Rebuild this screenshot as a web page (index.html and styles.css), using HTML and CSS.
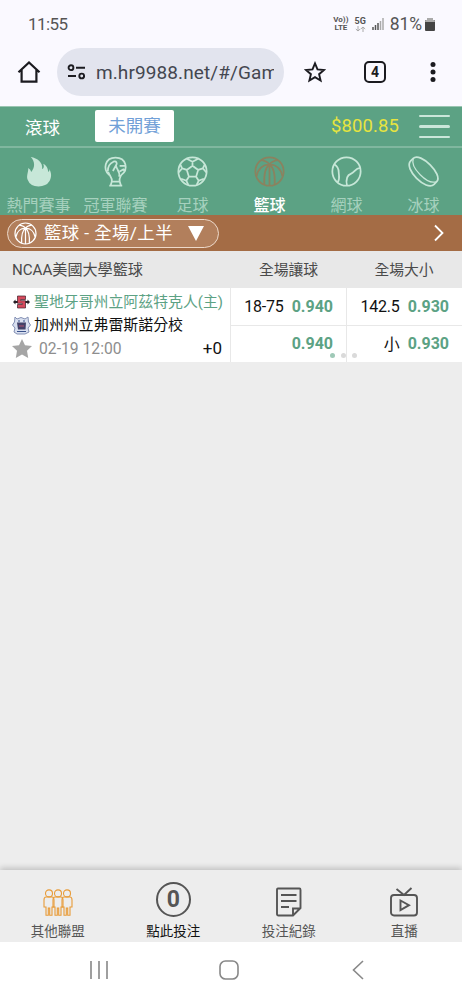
FILE: index.html
```html
<!DOCTYPE html>
<html lang="zh-Hant">
<head>
<meta charset="utf-8">
<title>籃球</title>
<link rel="stylesheet" href="styles.css">
</head>
<body>
<svg class="defs" aria-hidden="true">
  <symbol id="ball" viewBox="0 0 30 30">
    <circle cx="15" cy="15" r="13.7"/>
    <path d="M15 8.5V28.7M15 8.5C11 11 9.5 18 10 27.5M15 8.5C19 11 20.5 18 20 27.5M7 4C11 4.5 14 6.5 15 8.5C16 6.5 19 4.5 23 4M15 8.5C9 8 4 12 2.5 19.5M15 8.5C21 8 26 12 27.5 19.5"/>
  </symbol>
</svg>
<div class="phone">
  <header class="status">
    <span class="clock">11:55</span>
    <div class="signals">
      <span class="volte"><b>Vo))</b><b>LTE</b></span>
      <span class="net"><b>5G</b><svg width="11" height="6" viewBox="0 0 11 6"><path d="M3 0V5M.8 3L3 5L5.2 3M8 6V1M5.8 3L8 1L10.2 3"/></svg></span>
      <svg class="bars" width="12" height="12" viewBox="0 0 12 12"><path d="M1 12V9M3.5 12V7M6 12V5"/><path class="dim" d="M8.5 12V3M11 12V0"/></svg>
      <span class="percent">81%</span>
      <svg class="battery" width="10" height="13" viewBox="0 0 10 13"><path d="M2 0H8V2H9Q10 2 10 3V12Q10 13 9 13H1Q0 13 0 12V3Q0 2 1 2H2Z" fill="#444"/><path d="M2 0H8V2H9Q10 2 10 4H0Q0 2 1 2H2Z" fill="#aaa"/></svg>
    </div>
  </header>

  <div class="browser">
    <svg class="home" width="24" height="24" viewBox="0 0 24 24"><path d="M1.5 12.3L12 2.4L22.5 12.3M4.6 10V21.6H19.4V10"/></svg>
    <div class="address">
      <svg width="19" height="16" viewBox="0 0 19 16"><circle cx="4" cy="3.7" r="2.4"/><path d="M9 3.7H18M1 12H9"/><circle cx="14.7" cy="12" r="2.4"/></svg>
      <span>m.hr9988.net/#/Gam</span>
    </div>
    <svg class="bookmark" width="22" height="22" viewBox="0 0 22 22"><path d="M11 2.4L13.5 8.4L20 9L15.1 13.2L16.6 19.5L11 16.1L5.4 19.5L6.9 13.2L2 9L8.5 8.4Z"/></svg>
    <span class="tabs">4</span>
    <svg class="more" width="6" height="22" viewBox="0 0 6 22"><circle cx="3" cy="3.5" r="2.5"/><circle cx="3" cy="11" r="2.5"/><circle cx="3" cy="18.5" r="2.5"/></svg>
  </div>

  <div class="topbar">
    <span class="live">滾球</span>
    <span class="early">未開賽</span>
    <span class="balance">$800.85</span>
    <span class="menu"><i></i><i></i><i></i></span>
  </div>

  <nav class="sports">
    <div class="sport">
      <svg viewBox="0 0 30 30"><path class="solid" d="M7.5 1C14 2 19.5 6.5 18.5 12.5C20.5 12 20.5 9.5 19.5 7.5C23.5 9.5 24 12.5 24.5 15.5Q26 14.5 25.5 12.5C28 17 27.5 21 25.5 24.5Q22.5 29.5 15 29.5Q7 29.5 4.5 23C3 18.5 5.5 15.5 5 11.5Q7.5 13 8 15.5C11.5 11.5 12 5.5 7.5 1Z"/></svg>
      <span>熱門賽事</span>
    </div>
    <div class="sport">
      <svg viewBox="0 0 30 30"><path d="M9 18.5C2.500 13 4.500 1.500 15 1.500C25.500 1.500 28 13 20.500 18.500M9 28.700H21.500M10.500 24.800H19.800M10.300 28.500L11.500 24.500C12 21 9 19 8 15.500M20.200 28.500L19 24.500C18.500 21.500 19.500 20.500 20.500 18.500M7.500 15C7.500 11 9.500 7 13 5.500C16 4.500 17 7 15.500 9L12.500 14.500M15.500 9C15.500 13 20 15 18.500 20M19 9.500H25M19 15L22.500 13L24 15"/></svg>
      <span>冠軍聯賽</span>
    </div>
    <div class="sport">
      <svg viewBox="0 0 30 30"><circle cx="15" cy="15" r="13.7"/><path d="M15 9.5L20.5 13.5L18.5 20H11.5L9.5 13.5ZM15 9.5V5.5M20.5 13.5L25 12M18.5 20L21 24M11.5 20L9 24M9.5 13.5L5 12M9.5 2.7L15 5.5L20.5 2.7M27 8L25 12L28.5 16M26 22L21 24L19 28M11 28L9 24L4 22M1.5 16L5 12L3 8"/></svg>
      <span>足球</span>
    </div>
    <div class="sport active">
      <svg><use href="#ball"/></svg>
      <span>籃球</span>
    </div>
    <div class="sport">
      <svg viewBox="0 0 30 30"><circle cx="15" cy="15" r="13.7"/><path d="M3.2 8C6.5 10 7.5 13 7.5 16C7.5 19 9 22 6.5 25.5M28.4 11.5C23 12 23.5 15.5 19.5 17C15.5 18.5 14 22 15.5 28.7"/></svg>
      <span>網球</span>
    </div>
    <div class="sport">
      <svg viewBox="0 0 30 30"><g transform="rotate(45 15 15)"><path d="M-1 13C-1 3.500 31 3.500 31 13V16.500C31 27 -1 27 -1 16.500Z"/><path class="rim" d="M-.5 13.500C3 21.500 27 21.500 30.500 13.500"/></g></svg>
      <span>冰球</span>
    </div>
  </nav>

  <div class="filter">
    <div class="pill">
      <svg class="pill-ball"><use href="#ball"/></svg>
      <span>籃球 - 全場/上半</span>
      <i class="down"></i>
    </div>
    <svg class="next" width="10" height="18" viewBox="0 0 10 18"><path d="M1 1.5L8.5 9L1 16.5"/></svg>
  </div>

  <div class="league">
    <span class="league-name">NCAA美國大學籃球</span>
    <span>全場讓球</span>
    <span>全場大小</span>
  </div>

  <div class="match">
    <div class="teams">
      <div class="team host">
        <svg width="17" height="16" viewBox="0 0 17 16"><path d="M0 8L2.5 5.5V7H14.5V5.5L17 8L14.5 10.5V9H2.5V10.5Z" fill="#272127"/><path d="M4.500 2H12.500V5.500H7.700V6.700H12.500V14H4.500V10.500H9.300V9.300H4.500Z" fill="#d64a5d" stroke="#3d2029" stroke-width=".7"/></svg>
        <span>聖地牙哥州立阿茲特克人(主)</span>
      </div>
      <div class="team">
        <svg width="19" height="19" viewBox="0 0 19 19"><path d="M3 1L5 3L9 1.5L13 3L16 1L16.5 6L18.5 9L16 12L17 16L13 18H5L2 16L3 12L.5 9L2.5 6Z" fill="#d9e0f0" stroke="#8390b4"/><path d="M5 6.500H14L13.5 13.500H6Z" fill="#434269"/><path d="M6 5H8M11 5H13M5 15.500H14" stroke="#39518a" stroke-width="1.2"/><path d="M7 10H12" stroke="#b65370"/></svg>
        <span>加州州立弗雷斯諾分校</span>
      </div>
      <div class="kickoff">
        <svg width="20" height="19" viewBox="0 0 20 19"><path d="M10 0L13 6.2L20 7L15 11.8L16.2 19L10 15.5L3.8 19L5 11.8L0 7L7 6.2Z"/></svg>
        <time>02-19 12:00</time>
        <span class="extra">+0</span>
      </div>
    </div>
    <div class="odds">
      <div><span>18-75</span><b>0.940</b></div>
      <div><b>0.940</b></div>
    </div>
    <div class="odds">
      <div><span>142.5</span><b>0.930</b></div>
      <div><span>小</span><b>0.930</b></div>
    </div>
    <div class="dots"><i class="on"></i><i></i><i></i></div>
  </div>

  <main class="blank"></main>

  <nav class="bottom">
    <div class="action">
      <svg class="people" width="30" height="28" viewBox="0 0 30 28"><g id="person"><circle cx="6" cy="4.4" r="3.5"/><path d="M3 8H9Q11 8 11 11V18H9V26.3H6.7V19H5.3V26.3H3V18H1V11Q1 8 3 8Z"/></g><use href="#person" x="9"/><use href="#person" x="18"/></svg>
      <span>其他聯盟</span>
    </div>
    <div class="action current">
      <b class="count">0</b>
      <span>點此投注</span>
    </div>
    <div class="action">
      <svg width="26" height="30" viewBox="0 0 26 30"><path d="M2 1.5H23.5Q24.5 1.5 24.5 3V21L17 28.5H2.5Q1 28.5 1 27V3Q1 1.5 2 1.5ZM17 28V21.5H24M5 8H20.5M5 14H20.5M5 20H13"/></svg>
      <span>投注紀錄</span>
    </div>
    <div class="action">
      <svg width="30" height="30" viewBox="0 0 30 30"><rect x="2" y="8" width="26" height="20.5" rx="3"/><path d="M7.5 2L15 8L22.5 1M11.5 13.5L20 18.2L11.5 23Z"/></svg>
      <span>直播</span>
    </div>
  </nav>

  <footer class="system">
    <svg width="18" height="20" viewBox="0 0 18 20"><path d="M1 1V19M9 1V19M17 1V19"/></svg>
    <svg class="square" width="20" height="20" viewBox="0 0 20 20"><rect x="1" y="1" width="18" height="18" rx="5.5"/></svg>
    <svg width="12" height="20" viewBox="0 0 12 20"><path d="M11 1L1.5 10L11 19"/></svg>
  </footer>
</div>
</body>
</html>
```

FILE: styles.css
```css
* { box-sizing: border-box; }
body { margin: 0; font-family: Roboto, "Noto Sans CJK TC", sans-serif; }
.defs { display: none; }
.phone { width: 462px; height: 1000px; display: flex; flex-direction: column; background: #ededed; overflow: hidden; }
.phone > * { flex-shrink: 0; }
svg { fill: none; stroke: currentColor; flex-shrink: 0; }

.status { height: 48px; display: flex; align-items: center; justify-content: space-between; padding: 0 27px 0 28px; background: #faf9ff; color: #555; }
.clock { font-size: 17px; letter-spacing: -.6px; }
.signals { display: flex; align-items: center; }
.volte, .net { display: flex; flex-direction: column; align-items: center; font-size: 8px; line-height: 8px; }
.volte { margin-right: 6px; }
.net { font-size: 9px; margin-right: 6px; }
.net svg { stroke: #aaa; margin-top: 1px; }
.bars { stroke-width: 1.5; margin-right: 6px; }
.bars .dim { stroke: #aaa; }
.percent { font-size: 17.5px; letter-spacing: -.1px; margin-right: 3px; }
.battery { stroke: none; }

.browser { height: 58px; display: flex; align-items: center; padding: 0 26px 10px 17px; background: #faf9ff; color: #1b1b20; }
.home { stroke-width: 2.2; }
.address { width: 227px; height: 48px; margin-left: 16px; padding-left: 10px; border-radius: 24px; background: #e2e4ee; display: flex; align-items: center; overflow: hidden; }
.address svg { stroke-width: 1.9; margin-right: 10px; }
.address span { width: 178px; overflow: hidden; white-space: nowrap; font-size: 19px; letter-spacing: .1px; color: #444750; }
.bookmark { margin-left: 20px; stroke-width: 1.9; }
.tabs { width: 22px; height: 22px; margin-left: 38px; border: 2.2px solid #1b1b20; border-radius: 5px; font-size: 14px; font-weight: 700; line-height: 18px; text-align: center; }
.more { margin-left: auto; fill: #1b1b20; stroke: none; }

.topbar { height: 42px; display: flex; align-items: center; padding: 0 12px 0 25px; background: #5ca284; border-bottom: 2px solid #80b79f; border-top: 1px solid #9ac5b2; color: #fff; font-size: 17.5px; }
.live { width: 70px; margin-top: -1px; }
.early { width: 79px; height: 32px; margin-top: -1px; border-radius: 2px; background: #fff; color: #71a0d7; line-height: 32px; text-align: center; font-size: 17.5px; }
.balance { margin-left: auto; margin-top: -2px; color: #e6e43f; font-size: 18.5px; letter-spacing: .1px; }
.menu { width: 31px; margin-left: 20px; display: flex; flex-direction: column; gap: 8px; }
.menu i { height: 2.5px; border-radius: 2px; background: #cbe6da; }

.sports { height: 67px; display: flex; background: #5ca284; color: #a6d1be; }
.sport { width: 77px; display: flex; flex-direction: column; align-items: center; padding-top: 8px; font-size: 16px; line-height: 24px; white-space: nowrap; }
.sport svg { width: 31px; height: 31px; margin-bottom: 7px; stroke: #c7e7d8; stroke-width: 1.7; overflow: visible; }
.sport .solid { fill: #c7e7d8; stroke: none; }
.sport .rim { stroke-width: 1.2; }
.sport.active { color: #fff; font-weight: 500; }
.sport.active svg { stroke: #8b825f; }

.filter { height: 36px; display: flex; align-items: center; justify-content: space-between; padding: 0 18px 0 7px; background: #a46c45; color: #fff; }
.pill { width: 212px; height: 29px; display: flex; align-items: center; border: 1px solid #edd9ca; border-radius: 15px; background: #b27f5c; padding-left: 6px; font-size: 17.4px; letter-spacing: .4px; white-space: nowrap; }
.pill span { width: 129px; margin-top: -4px; }
.pill-ball { width: 23px; height: 23px; margin-right: 7px; stroke-width: 1.6; }
.down { margin-left: 15px; border: 8.5px solid transparent; border-top: 15px solid #fff; border-bottom: 0; }
.next { stroke-width: 1.8; }

.league { height: 37px; display: grid; grid-template-columns: 231px 115px 1fr; align-items: center; padding-bottom: 3px; background: #e8e8e8; color: #4a4a4a; font-size: 14.8px; text-align: center; }
.league-name { padding-left: 12px; text-align: left; font-size: 15.1px; }

.match { position: relative; height: 74px; display: grid; grid-template-columns: 230px 116px 116px; background: #fff; }
.teams { padding: 3px 8px 0 12px; white-space: nowrap; }
.team { height: 23px; display: flex; align-items: center; gap: 3px; font-size: 14.9px; color: #111; }
.team span { margin-top: -4px; }
.team svg { stroke: none; width: 19px; }
.host { color: #5ca284; }
.host svg { margin-top: -2px; }
.kickoff { height: 22px; display: flex; align-items: center; font-size: 15.7px; color: #8e8e8e; }
.kickoff svg { fill: #a5a5a5; stroke: none; margin-right: 7px; }
.extra { margin-left: auto; font-size: 17px; color: #111; }
.odds { border-left: 1px solid #e8e8e8; font-size: 16px; color: #111; }
.odds div { height: 37px; display: flex; align-items: center; justify-content: flex-end; gap: 8px; padding-right: 13px; }
.odds div:last-child { padding-bottom: 2px; }
.odds span { letter-spacing: -.2px; }
.odds div + div { border-top: 1px solid #e8e8e8; }
.odds b { color: #5ca284; font-weight: 700; }
.dots { position: absolute; left: 330px; top: 65px; display: flex; gap: 6px; }
.dots i { width: 5px; height: 5px; border-radius: 50%; background: #dadada; }
.dots .on { background: #9fc9b7; }

.blank { flex: 1; }

.bottom { height: 72px; display: grid; grid-template-columns: repeat(4, 1fr); background: #ededed; box-shadow: 0 -2px 6px rgba(0, 0, 0, .2); color: #555; }
.action { display: flex; flex-direction: column; align-items: center; justify-content: flex-end; font-size: 13.5px; line-height: 20px; padding-bottom: 1px; }
.action svg { stroke-width: 1.9; margin-bottom: 4px; }
.action .people { stroke: #e89b38; stroke-width: 1.1; }
.current { color: #111; }
.count { width: 35px; height: 35px; border: 2px solid #555; border-radius: 50%; margin-bottom: 4px; color: #555; font-size: 23px; line-height: 32px; text-align: center; }

.system { height: 58px; background: #fff; display: flex; align-items: center; padding: 0 98px 3px 90px; justify-content: space-between; color: #888; }
.system svg { stroke-width: 1.6; }
.system .square { margin-right: 3px; }
```
